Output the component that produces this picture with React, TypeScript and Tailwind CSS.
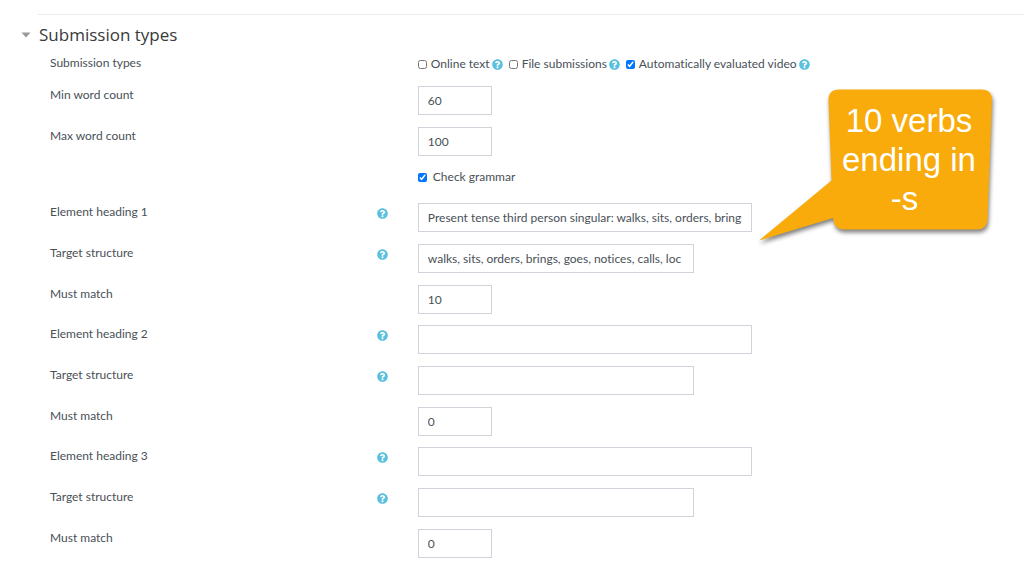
import { useId } from 'react';
import type { ReactNode } from 'react';
import { FaQuestionCircle } from 'react-icons/fa';

const HelpButton = ({ topic }: { topic: string }) => (
  <button type="button" aria-label={`Help with ${topic}`} className="shrink-0 text-[#5bc0de]">
    <FaQuestionCircle className="size-[11px]" />
  </button>
);

interface RowProps {
  label?: string;
  htmlFor?: string;
  help?: boolean;
  children: ReactNode;
}

const Row = ({ label, htmlFor, help, children }: RowProps) => (
  <div className="grid grid-cols-[38%_1fr]">
    <div className="flex items-start justify-between pr-[30px]">
      {htmlFor ? <label htmlFor={htmlFor}>{label}</label> : <span>{label}</span>}
      {help && label && (
        <span className="flex pt-[5px]">
          <HelpButton topic={label} />
        </span>
      )}
    </div>
    <div className="flex min-w-0 items-center">{children}</div>
  </div>
);

const widths = {
  sm: 'w-[74px]',
  md: 'w-[276px]',
  lg: 'w-[334px]',
};

interface TextRowProps {
  label: string;
  value?: string;
  size: keyof typeof widths;
  help?: boolean;
}

const TextRow = ({ label, value = '', size, help }: TextRowProps) => {
  const id = useId();
  return (
    <Row label={label} htmlFor={id} help={help}>
      <input
        id={id}
        type="text"
        defaultValue={value}
        className={`h-[29px] max-w-full border border-[#ced4da] bg-white px-[9px] text-[#495057] outline-none focus:border-[#80bdff] ${widths[size]}`}
      />
    </Row>
  );
};

interface CheckProps {
  label: string;
  checked?: boolean;
  className?: string;
}

const Check = ({ label, checked, className = 'gap-1' }: CheckProps) => (
  <label className={`flex items-center ${className}`}>
    <input type="checkbox" defaultChecked={checked} className="size-[9px] shrink-0 accent-[#0075ff]" />
    {label}
  </label>
);

const submissionTypes = [
  { label: 'Online text', checked: false },
  { label: 'File submissions', checked: false },
  { label: 'Automatically evaluated video', checked: true },
];

const elements = [
  {
    heading: 'Present tense third person singular: walks, sits, orders, brings',
    target: 'walks, sits, orders, brings, goes, notices, calls, loc',
    match: '10',
  },
  { heading: '', target: '', match: '0' },
  { heading: '', target: '', match: '0' },
];

const Callout = () => (
  <div className="absolute top-[84px] left-[752px] h-[164px] w-[252px]">
    <svg viewBox="0 0 252 164" className="absolute inset-0 size-full overflow-visible" aria-hidden="true">
      <path
        d="M87 5.500H229.500Q240 5.500 240 16L235.500 135.500Q235 145.500 225 145.500H92Q83 145.500 81.500 137L81 134L7 156.500L79.500 96.500L76.500 16Q76.500 5.500 87 5.500Z"
        fill="#f8ab0b"
        className="drop-shadow-[1px_3px_2px_rgba(0,0,0,0.5)]"
      />
    </svg>
    <p className="relative ml-[78px] w-[158px] pt-[17px] text-center font-['Liberation_Sans',sans-serif] text-[33px] leading-[39px] text-white">
      10 verbs
      <br />
      ending in
      <br />
      -s&nbsp;
    </p>
  </div>
);

export default function App() {
  return (
    <main className="relative min-h-screen bg-white font-['Lato','Open_Sans',sans-serif] text-[12px] leading-[18px] text-[#495057] [font-variant-ligatures:none]">
      <form className="pt-[14px] pb-3">
        <fieldset className="min-w-0">
          <div className="ml-[38px] border-t border-[#e9ecef]" />
          <h3 className="mt-2 ml-[21px] font-['Open_Sans',sans-serif]">
            <button type="button" aria-expanded="true" className="flex items-center gap-2 text-[17px] leading-6 text-[#373a3c]">
              <svg viewBox="0 0 10 6" className="h-1.5 w-2.5" aria-hidden="true">
                <path d="M0.500 0.500H9.500L5 5.500Z" fill="#999" />
              </svg>
              Submission types
            </button>
          </h3>

          <div className="mt-[7px] pr-1.5 pl-[50px]">
            <Row label="Submission types">
              <div className="flex flex-wrap gap-x-1.5 pt-px">
                {submissionTypes.map((type) => (
                  <span key={type.label} className="flex items-center gap-0.5">
                    <Check label={type.label} checked={type.checked} />
                    <HelpButton topic={type.label} />
                  </span>
                ))}
              </div>
            </Row>

            <div className="mt-[13px] flex flex-col gap-3">
              <TextRow label="Min word count" value="60" size="sm" />
              <TextRow label="Max word count" value="100" size="sm" />
              <Row>
                <Check label="Check grammar" checked className="gap-1.5" />
              </Row>
            </div>

            <div className="mt-[17px] flex flex-col gap-[11px]">
              {elements.map((element, index) => (
                <div key={index} className="flex flex-col gap-3">
                  <TextRow label={`Element heading ${index + 1}`} value={element.heading} size="lg" help />
                  <TextRow label="Target structure" value={element.target} size="md" help />
                  <TextRow label="Must match" value={element.match} size="sm" />
                </div>
              ))}
            </div>
          </div>
        </fieldset>
      </form>
      <Callout />
    </main>
  );
}
